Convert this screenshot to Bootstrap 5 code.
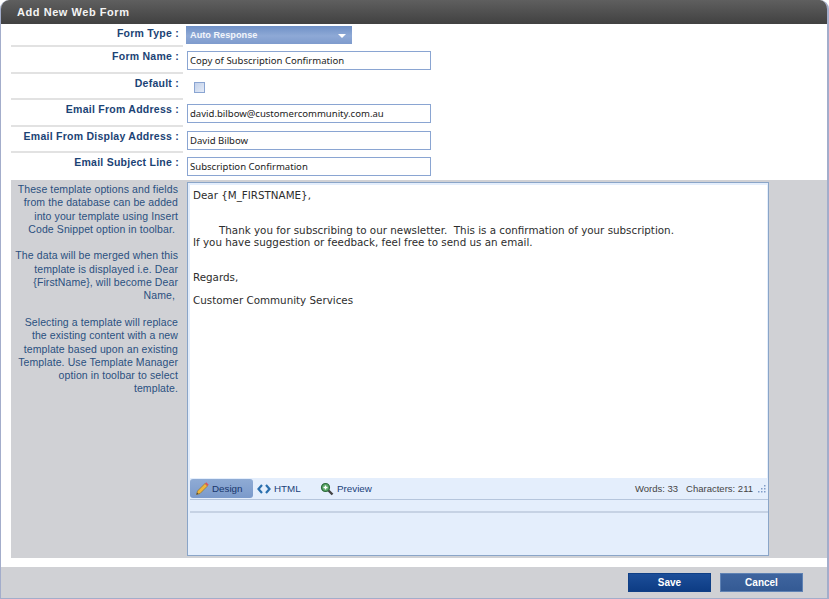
<!DOCTYPE html>
<html lang="en"><head><meta charset="utf-8"><title>Add New Web Form</title>
<link href="https://cdn.jsdelivr.net/npm/bootstrap@5.3.0/dist/css/bootstrap.min.css" rel="stylesheet">
<style>
html,body{height:599px;overflow:hidden;background:#fff}
body{font-family:"Noto Sans","DejaVu Sans",sans-serif;font-size:10px;color:#222}
.frame{height:599px;border:solid #a3adcb;border-width:0 2px 1px 1px;border-radius:9px 9px 0 0;overflow:hidden;display:flex;flex-direction:column;width:829px}
.head{height:24px;flex:none;background:linear-gradient(#5f5f5f,#414141);color:#f4f4f4;font:bold 11px/25px "Liberation Sans",sans-serif;padding-left:16px;letter-spacing:.55px}
.frow{display:flex;flex:none}
.lab{width:172px;margin-left:10px;border-bottom:2px solid #e2e2e2;text-align:right;padding-right:4px;color:#1b4375;font:bold 10.5px/13px "Liberation Sans",sans-serif;letter-spacing:.25px;padding-top:3px;white-space:nowrap;display:flex;justify-content:flex-end}
.r1{height:23px}.r2{height:27px}.r3{height:26px}.r4{height:27px}.r5{height:26px}.r6{height:27px}
.r6 .lab{border-bottom:0}
.ctl{padding-left:4px;flex:1}
.txt{display:block;width:244px;height:19px;border:1px solid #8aa5d2;background:#fff;padding:0 2px;font-size:9.55px;line-height:17px;color:#222;margin-top:4px;font-family:"Noto Sans",sans-serif;border-radius:0;box-shadow:none}
.pick{width:166px;height:18px;margin-top:2px;margin-left:-1px;background:linear-gradient(#6f90c6,#8ea9d6 55%,#7e9bcd);color:#f2f5fb;font:bold 9.2px/18px "Liberation Sans",sans-serif;padding:0 0 0 4px;position:relative;border:0;text-align:left;border-radius:0;display:block}
.pick::after{content:"";position:absolute;right:6px;top:8px;border:4px solid transparent;border-top:4px solid #fff;border-bottom:0}
.cbox{width:11px;height:11px;margin:8px 0 0 7px;border:1px solid #8aa5d2;background:linear-gradient(135deg,#c3d1ea,#e4ebf7);display:block;border-radius:0;padding:0}
.graybit{margin-left:10px;height:378px;flex:none;background:#d0d1d5;display:flex;padding-top:2px}
.help{width:172px;text-align:right;padding:1px 5px 0 0;font:10.5px/13.3px "Liberation Sans",sans-serif;color:#2a5080;letter-spacing:.1px;margin:0;white-space:nowrap}
.help span{display:block;margin-bottom:13.3px}
.editor{width:582px;height:374px;margin-left:4px;border:1px solid #8aa5c8;background:#e4eefc;display:flex;flex-direction:column;padding:2px 1px 0 2px}
.paper{height:293px;background:#fff;font:10.33px/11.7px "DejaVu Sans",sans-serif;color:#2d2d2d;padding:5px 3px;white-space:pre-wrap;flex:none}
.ind{padding-left:3px}
.bar{height:22px;flex:none;border-bottom:1px solid #b5c5dc;display:flex;align-items:center;font:9.8px/20px "Liberation Sans",sans-serif;color:#21427a;margin-right:-1px}
.tab{display:flex;align-items:center;gap:2px;height:19px;padding:0 5px;color:#21427a}
.tab.on{width:63px;background:linear-gradient(#8fabd4,#7b9acb);border-radius:3px;color:#17356c}
.stats{margin-left:auto;color:#444;font:9.5px/20px "Liberation Sans",sans-serif;display:flex;gap:8px;padding-right:2px;align-items:center}
.stats svg{margin-left:-4px}
.strip{height:13px;flex:none;border-bottom:2px solid #c6d2e4;margin-right:-1px}
.white{height:9px;flex:none}
.foot{flex:1;background:#d0d1d5;display:flex;justify-content:flex-end;gap:9px;padding:6px 24px 0 0}
.act{width:83px;height:19px;padding:0;border-radius:0;font:bold 10px/17px "Liberation Sans",sans-serif;color:#fff;border:1px solid #0f3f86;background:linear-gradient(#1c4e99,#0d3c84)}
.act.alt{border-color:#5f82b4;background:linear-gradient(#3f659f,#345a94)}
.act:hover{color:#fff}
</style></head><body>
<div class="frame">
<div class="head">Add New Web Form</div>
<div class="frow r1"><div class="lab">Form Type :</div><div class="ctl"><button type="button" class="btn pick">Auto Response</button></div></div>
<div class="frow r2"><div class="lab">Form Name :</div><div class="ctl"><input class="form-control txt" value="Copy of Subscription Confirmation"></div></div>
<div class="frow r3"><div class="lab">Default :</div><div class="ctl"><span class="cbox"></span></div></div>
<div class="frow r4"><div class="lab">Email From Address :</div><div class="ctl"><input class="form-control txt" value="david.bilbow@customercommunity.com.au"></div></div>
<div class="frow r5"><div class="lab">Email From Display Address :</div><div class="ctl"><input class="form-control txt" value="David Bilbow"></div></div>
<div class="frow r6"><div class="lab">Email Subject Line :</div><div class="ctl"><input class="form-control txt" value="Subscription Confirmation"></div></div>
<div class="graybit">
<div class="help"><span>These template options and fields<br>from the database can be added<br>into your template using Insert<br>Code Snippet option in toolbar.&nbsp;</span><span>The data will be merged when this<br>template is displayed i.e. Dear<br>{FirstName}, will become Dear<br>Name,&nbsp;</span><span>Selecting a template will replace<br>the existing content with a new<br>template based upon an existing<br>Template. Use Template Manager<br>option in toolbar to select<br>template.</span></div>
<div class="editor">
<div class="paper">Dear {M_FIRSTNAME},


<span class="ind">       Thank you for subscribing to our newsletter.  This is a confirmation of your subscription.</span>
If you have suggestion or feedback, feel free to send us an email.


Regards,

Customer Community Services</div>
<div class="bar">
<div class="tab on"><svg width="15" height="15" viewBox="0 0 15 15"><path d="M1.500 13.500l1-3.500 7.500-7.500 2.500 2.500-7.500 7.500z" fill="#eeb53c" stroke="#8a6a20" stroke-width=".6"/><path d="M1.500 13.500l.6-2 1.400 1.400z" fill="#444"/><path d="M10 2.500l1.200-1.200 2.500 2.500-1.200 1.200z" fill="#d55"/></svg><span>Design</span></div>
<div class="tab" style="padding-left:4px;gap:3px;width:62px"><svg width="14" height="10" viewBox="0 0 14 10"><path d="M5 1L1.500 5 5 9M9 1l3.500 4L9 9" fill="none" stroke="#2a6fae" stroke-width="2.200"/></svg><span>HTML</span></div>
<div class="tab" style="gap:3px"><svg width="14" height="14" viewBox="0 0 14 14"><path d="M8 8l4.500 4.500" stroke="#444" stroke-width="2.400"/><circle cx="5.500" cy="5.500" r="4" fill="#5aa867" stroke="#2f6b3d" stroke-width="1.200"/><path d="M3.500 5.500h4M5.500 3.500v4" stroke="#fff" stroke-width="1.300"/></svg><span>Preview</span></div>
<div class="stats"><span>Words: 33</span><span>Characters: 211</span><svg width="9" height="9" viewBox="0 0 9 9" fill="#7f9cc8"><rect x="7" y="1" width="1.500" height="1.500"/><rect x="4" y="4" width="1.500" height="1.500"/><rect x="7" y="4" width="1.500" height="1.500"/><rect x="1" y="7" width="1.500" height="1.500"/><rect x="4" y="7" width="1.500" height="1.500"/><rect x="7" y="7" width="1.500" height="1.500"/></svg></div>
</div>
<div class="strip"></div>
</div>
</div>
<div class="white"></div>
<div class="foot"><button type="button" class="btn act">Save</button><button type="button" class="btn act alt">Cancel</button></div>
</div>
</body></html>
